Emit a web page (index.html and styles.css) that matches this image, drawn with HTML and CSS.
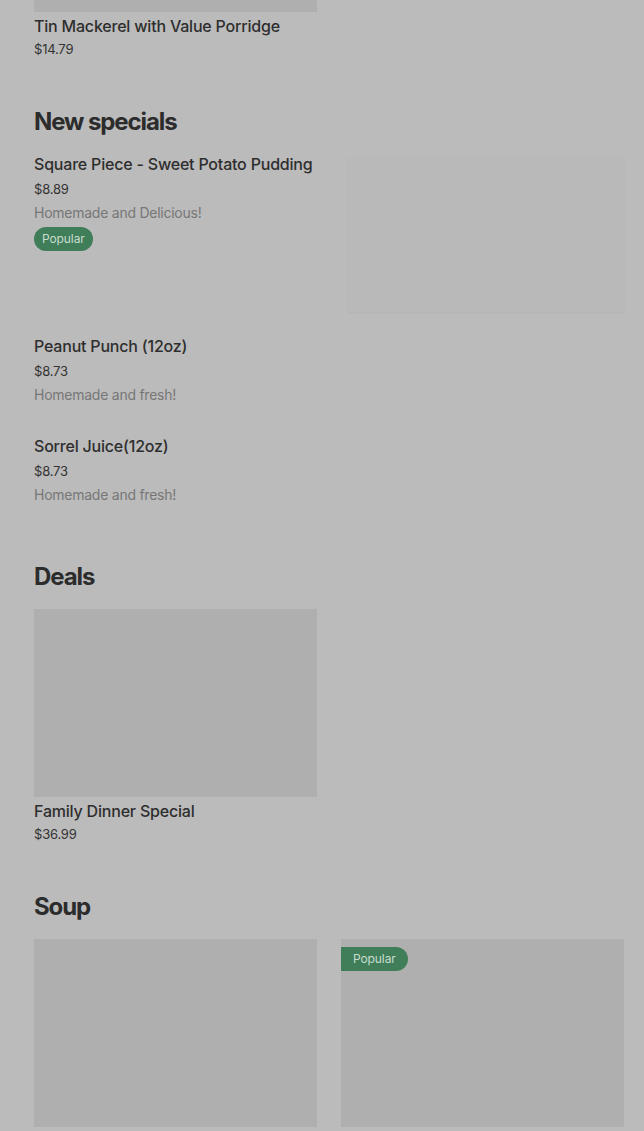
FILE: index.html
```html
<!DOCTYPE html>
<html lang="en">
<head>
<meta charset="utf-8">
<title>Menu</title>
<link rel="stylesheet" href="styles.css">
</head>
<body>
<main class="page">
  <section class="section section--first">
    <div class="grid">
      <article class="card">
        <div class="card-image card-image--cropped"></div>
        <h3 class="item-title">Tin Mackerel with Value Porridge</h3>
        <p class="item-price">$14.79</p>
      </article>
    </div>
  </section>

  <section class="section">
    <h2 class="section-title">New specials</h2>
    <div class="list">
      <article class="item item--with-image">
        <div class="item-text">
          <h3 class="item-title">Square Piece - Sweet Potato Pudding</h3>
          <p class="item-price">$8.89</p>
          <p class="item-desc">Homemade and Delicious!</p>
          <span class="badge">Popular</span>
        </div>
        <div class="item-image"></div>
      </article>
      <article class="item">
        <div class="item-text">
          <h3 class="item-title">Peanut Punch (12oz)</h3>
          <p class="item-price">$8.73</p>
          <p class="item-desc">Homemade and fresh!</p>
        </div>
      </article>
      <article class="item">
        <div class="item-text">
          <h3 class="item-title">Sorrel Juice(12oz)</h3>
          <p class="item-price">$8.73</p>
          <p class="item-desc">Homemade and fresh!</p>
        </div>
      </article>
    </div>
  </section>

  <section class="section">
    <h2 class="section-title">Deals</h2>
    <div class="grid">
      <article class="card">
        <div class="card-image"></div>
        <h3 class="item-title">Family Dinner Special</h3>
        <p class="item-price">$36.99</p>
      </article>
    </div>
  </section>

  <section class="section">
    <h2 class="section-title">Soup</h2>
    <div class="grid">
      <article class="card">
        <div class="card-image"></div>
      </article>
      <article class="card">
        <div class="card-image">
          <span class="badge badge--corner">Popular</span>
        </div>
      </article>
    </div>
  </section>
</main>
</body>
</html>
```

FILE: styles.css
```css
html, body {
  margin: 0;
  padding: 0;
  background: #bbbbbb;
}

body {
  font-family: Inter, "Noto Sans", "Liberation Sans", sans-serif;
  color: #2e2e2e;
  overflow: hidden;
}

.page {
  padding: 0 20px 0 34px;
  display: flex;
  flex-direction: column;
  gap: 47px;
}

.section-title {
  margin: 0 0 16px;
  font-size: 24px;
  line-height: 32px;
  font-weight: 700;
  letter-spacing: -1.1px;
  color: #2c2c2c;
}

.grid {
  display: grid;
  grid-template-columns: 283px 283px;
  column-gap: 24px;
}

.card {
  display: flex;
  flex-direction: column;
}

.card-image {
  position: relative;
  height: 188px;
  background: #afafaf;
}

.card-image--cropped {
  height: 12px;
}

.card .item-title {
  margin-top: 4px;
}

.card .item-price {
  margin-top: 3px;
}

.item-title {
  margin: 0;
  font-size: 16px;
  line-height: 20px;
  font-weight: 500;
  letter-spacing: -0.2px;
  color: #2e2e2e;
}

.item-price {
  margin: 5px 0 0;
  font-size: 13px;
  line-height: 20px;
  color: #333333;
  letter-spacing: -0.2px;
}

.item-desc {
  margin: 4px 0 0;
  font-size: 14px;
  line-height: 20px;
  color: #777777;
  letter-spacing: -0.25px;
}

.list {
  display: flex;
  flex-direction: column;
}

.item {
  display: flex;
  align-items: flex-start;
  gap: 24px;
  padding-bottom: 31px;
}

.item:last-child {
  padding-bottom: 9px;
}

.item--with-image {
  padding-bottom: 24px;
}

.item-text {
  flex: 1;
  min-width: 0;
  display: flex;
  flex-direction: column;
  align-items: flex-start;
}

.item-image {
  flex: 0 0 276px;
  height: 155px;
  margin-top: 3px;
  background: #b9b9b9;
  box-shadow: 0 1px 2px rgba(0, 0, 0, 0.04);
}

.badge {
  display: inline-block;
  margin-top: 4px;
  padding: 0 8px;
  height: 24px;
  line-height: 24px;
  border-radius: 12px;
  background: #3f7e59;
  color: #c9dccf;
  font-size: 12px;
  letter-spacing: -0.1px;
}

.badge--corner {
  position: absolute;
  top: 8px;
  left: 0;
  margin: 0;
  padding: 0 12px;
  border-radius: 0 12px 12px 0;
}
```
